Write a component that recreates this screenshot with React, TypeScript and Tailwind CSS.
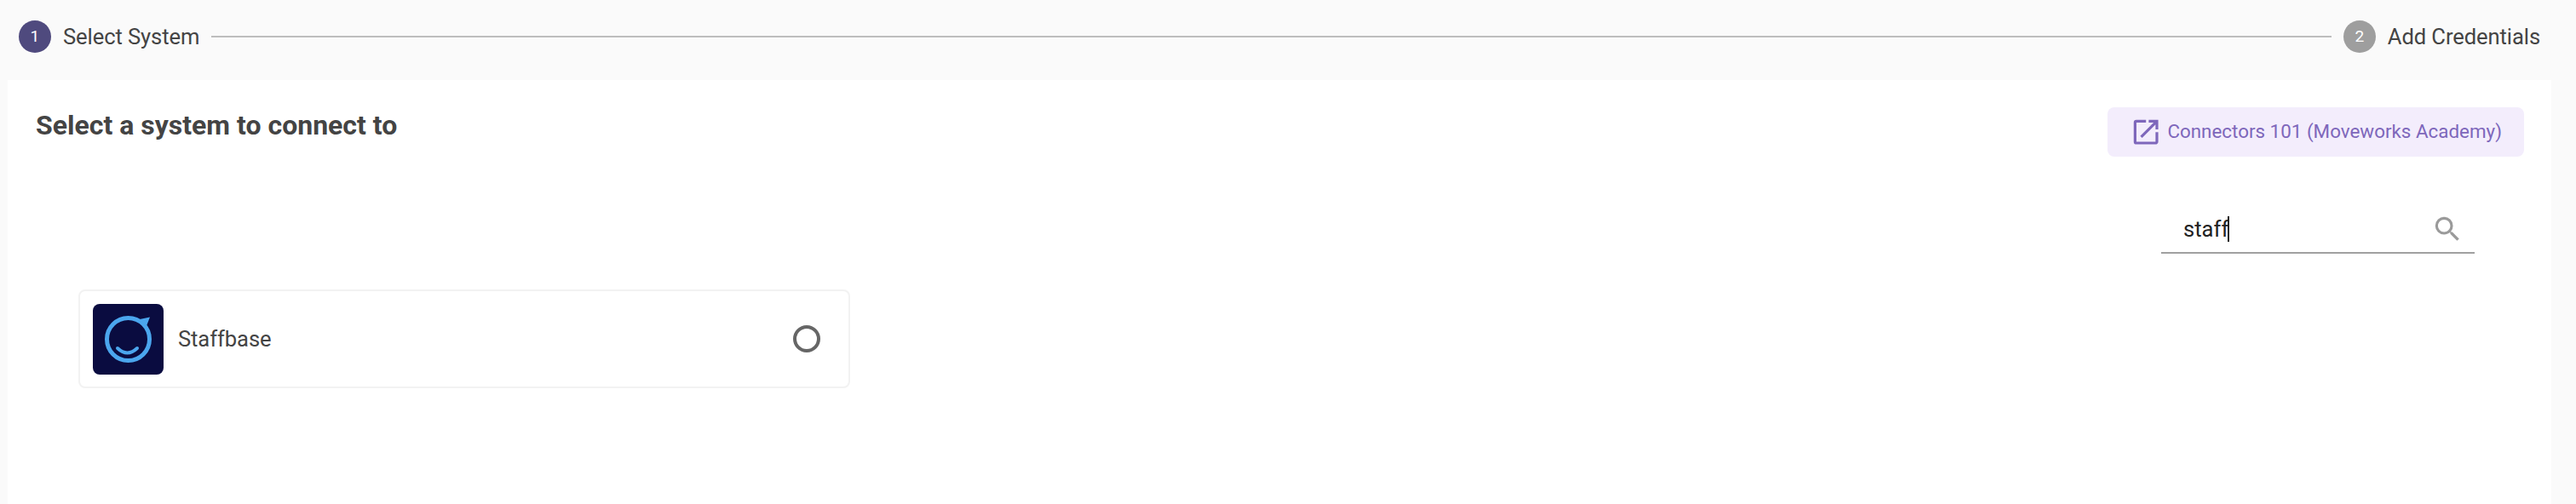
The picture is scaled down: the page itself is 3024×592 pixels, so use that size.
import { MdOpenInNew, MdSearch } from 'react-icons/md';

const FONT = "font-[Roboto,'Liberation_Sans',sans-serif]";

function Step({ n, label, active }: { n: number; label: string; active?: boolean }) {
  return (
    <div className="flex items-center gap-[14px]">
      <div
        className={`flex h-[38px] w-[38px] items-center justify-center rounded-full text-[19.2px] text-white ${
          active ? 'bg-[#4f4a7e]' : 'bg-[#9e9e9e]'
        }`}
      >
        {n}
      </div>
      <span className="text-[25.6px] leading-[38px] tracking-[-0.1px] text-[#444444]">{label}</span>
    </div>
  );
}

function StaffbaseLogo() {
  return (
    <svg viewBox="0 0 83 83" className="h-[83px] w-[83px] rounded-[8px]">
      <rect width="83" height="83" fill="#0a0c40" />
      <circle cx="41.500" cy="41.500" r="25" fill="none" stroke="#4ba6ee" strokeWidth="5" />
      <path d="M55 18 67 15.500 62.500 27Z" fill="#4ba6ee" />
      <path d="M29 52Q40.500 63 52 52" fill="none" stroke="#4ba6ee" strokeWidth="4" strokeLinecap="round" />
    </svg>
  );
}

export default function App() {
  return (
    <div className={`flex h-[592px] w-[3024px] flex-col overflow-hidden bg-[#fafafa] ${FONT}`}>
      <div className="flex h-[94px] shrink-0 items-start pl-[22px] pr-[42px] pt-[24px]">
        <Step n={1} label="Select System" active />
        <div className="mx-[14px] mt-[18px] h-[2px] flex-1 bg-[#bdbdbd]" />
        <Step n={2} label="Add Credentials" />
      </div>

      <div className="ml-[9px] mr-[29px] flex-1 bg-white pl-[33px] pr-[32px] pt-[32px]">
        <div className="flex items-start justify-between">
          <h2 className="text-[32px] font-bold leading-[42px] text-[#444444]">Select a system to connect to</h2>
          <a className="flex h-[58px] items-center gap-[6px] rounded-[8px] bg-[#f3edfc] pl-[26px] pr-[26px] text-[22.4px] text-[#7e67bb]">
            <MdOpenInNew className="h-[38.4px] w-[38.4px]" />
            Connectors 101 (Moveworks Academy)
          </a>
        </div>

        <div className="mr-[58px] mt-[56px] flex justify-end">
          <div className="flex h-[58px] w-[368px] items-center justify-between border-b-2 border-[#a0a0a0] pl-[26px] pr-[13px] pt-[2px]">
            <div className="flex items-center text-[25.6px] text-[#222222]">
              staff
              <span className="ml-[-1px] h-[30px] w-[2px] bg-[#222222]" />
            </div>
            <MdSearch className="h-[38.4px] w-[38.4px] text-[#9a9a9a]" />
          </div>
        </div>

        <div className="ml-[50px] mt-[42px] flex h-[116px] w-[906px] items-center justify-between rounded-[8px] border-2 border-[#f2f2f2] pl-[15px] pr-[33px]">
          <div className="flex items-center gap-[17px]">
            <StaffbaseLogo />
            <span className="text-[25.6px] tracking-[-0.1px] text-[#444444]">Staffbase</span>
          </div>
          <div className="h-[32px] w-[32px] rounded-full border-[4px] border-[#666666]" />
        </div>
      </div>
    </div>
  );
}
